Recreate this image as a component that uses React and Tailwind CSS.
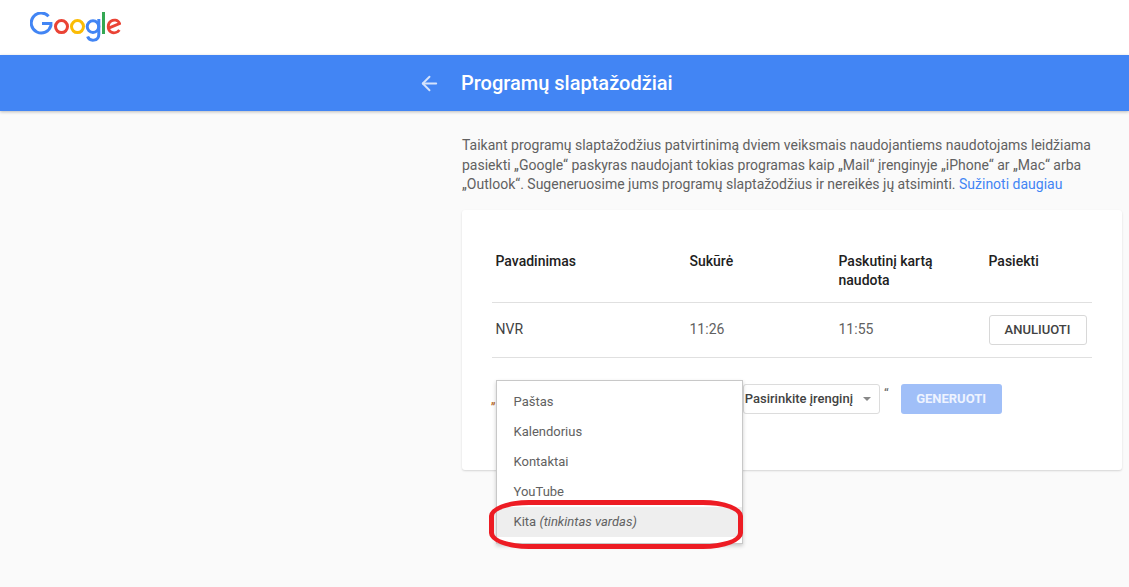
import { ArrowLeft } from "lucide-react";

const GoogleLogo = () => (
  <svg width="91" height="30" viewBox="0 0 91 30" fill="none" strokeWidth="3">
    <path d="M18.6 4.2A10 10 0 1 0 20.9 13.6V11.4H12" stroke="#4285f4" />
    <circle cx="31.5" cy="14.6" r="6" stroke="#ea4335" />
    <circle cx="47.5" cy="14.6" r="6" stroke="#fbbc05" />
    <circle cx="63" cy="14.6" r="5.8" stroke="#4285f4" />
    <path d="M68.8 7V22.5C68.8 29.5 59.5 29.8 57.6 24.6" stroke="#4285f4" />
    <path d="M73.5 0V22" stroke="#34a853" />
    <path d="M78 16.4L89.6 11.6C88 7.6 83.5 7.4 81 9.2 77 12 77.6 18.4 81 20 84 21.6 87.6 20.4 89.4 18" stroke="#ea4335" strokeWidth="2.8" />
  </svg>
);

const Dropdown = () => (
  <div className="absolute left-[34px] top-[170px] w-[247px] h-[164px] bg-white border border-[#c8c8c8] shadow-[0_2px_4px_rgba(0,0,0,0.2)] pt-[6px] text-[13px] text-[#616161]">
    <div className="h-[30px] flex items-center pl-[16.5px]">Paštas</div>
    <div className="h-[30px] flex items-center pl-[16.5px]">Kalendorius</div>
    <div className="h-[30px] flex items-center pl-[16.5px]">Kontaktai</div>
    <div className="h-[30px] flex items-center pl-[16.5px]">YouTube</div>
    <div className="h-[30px] flex items-center pl-[16.5px] bg-[#eeeeee]">
      Kita&nbsp;<em>(tinkintas vardas)</em>
    </div>
  </div>
);

export default function App() {
  return (
    <div className="relative h-[587px] overflow-hidden bg-[#fafafa] font-['Roboto',sans-serif]">
      <header className="h-[55px] bg-white pl-[30px] pt-[12px]">
        <GoogleLogo />
      </header>
      <div className="h-[56px] bg-[#4285f4] shadow-[0_1px_3px_rgba(0,0,0,0.25)] flex items-center pl-[418px] text-white">
        <ArrowLeft size={23} strokeWidth={2} className="text-[#d5e3fc]" />
        <h1 className="ml-[20px] text-[20px] font-medium">Programų slaptažodžiai</h1>
      </div>
      <main className="pl-[462px] w-[1122px] box-content">
        <p className="w-[640px] mt-[25px] text-[14px] leading-[19.5px] text-[#616161]">
          Taikant programų slaptažodžius patvirtinimą dviem veiksmais naudojantiems naudotojams leidžiama pasiekti „Google“ paskyras naudojant tokias programas kaip „Mail“ įrenginyje „iPhone“ ar „Mac“ arba „Outlook“. Sugeneruosime jums programų slaptažodžius ir nereikės jų atsiminti.{" "}
          <a className="text-[#4285f4]">Sužinoti daugiau</a>
        </p>
        <section className="relative w-[660px] h-[260px] mt-[15px] bg-white rounded-[3px] shadow-[0_1px_2px_rgba(0,0,0,0.15)] px-[30px] pt-[32px]">
          <div className="grid grid-cols-[194px_149px_150px_1fr] h-[61px] border-b border-[#e0e0e0] pl-[3.5px] text-[14px] leading-[19.5px] font-medium text-[#212121]">
            <div className="pt-[10px]">Pavadinimas</div>
            <div className="pt-[10px]">Sukūrė</div>
            <div className="pt-[10px] w-[110px]">Paskutinį kartą naudota</div>
            <div className="pt-[10px]">Pasiekti</div>
          </div>
          <div className="grid grid-cols-[194px_149px_150px_1fr] items-center h-[55px] border-b border-[#e0e0e0] pl-[3.5px] text-[14px] text-[#616161]">
            <div className="text-[#424242]">NVR</div>
            <div>11:26</div>
            <div>11:55</div>
            <button className="w-[98px] h-[30px] bg-white border border-[#d8d8d8] rounded-[3px] text-[13px] font-medium text-[#424242]">ANULIUOTI</button>
          </div>
          <div className="flex items-start mt-[26px] pl-[251px] text-[#616161]">
            <div className="w-[137px] h-[30px] border border-[#dcdcdc] rounded-[3px] bg-white flex items-center justify-end pr-[8px] text-[13px] font-medium text-[#424242]">
              Pasirinkite įrenginį
              <span className="ml-[10px] border-x-[4px] border-t-[4px] border-x-transparent border-t-[#888888]" />
            </div>
            <span className="ml-[4px] text-[13px] leading-[20px]">“</span>
            <button className="ml-[12px] w-[101px] h-[30px] bg-[#a0bff8] rounded-[3px] text-[13px] font-bold text-[#eef3ff]">GENERUOTI</button>
          </div>
          <span className="absolute left-[29px] top-[180px] text-[13px] text-[#b5651d]">„</span>
          <Dropdown />
        </section>
      </main>
      <div className="absolute left-[489px] top-[500px] w-[254px] h-[49px] border-[5px] border-[#ed1c24] rounded-[40px/16px]" />
    </div>
  );
}
